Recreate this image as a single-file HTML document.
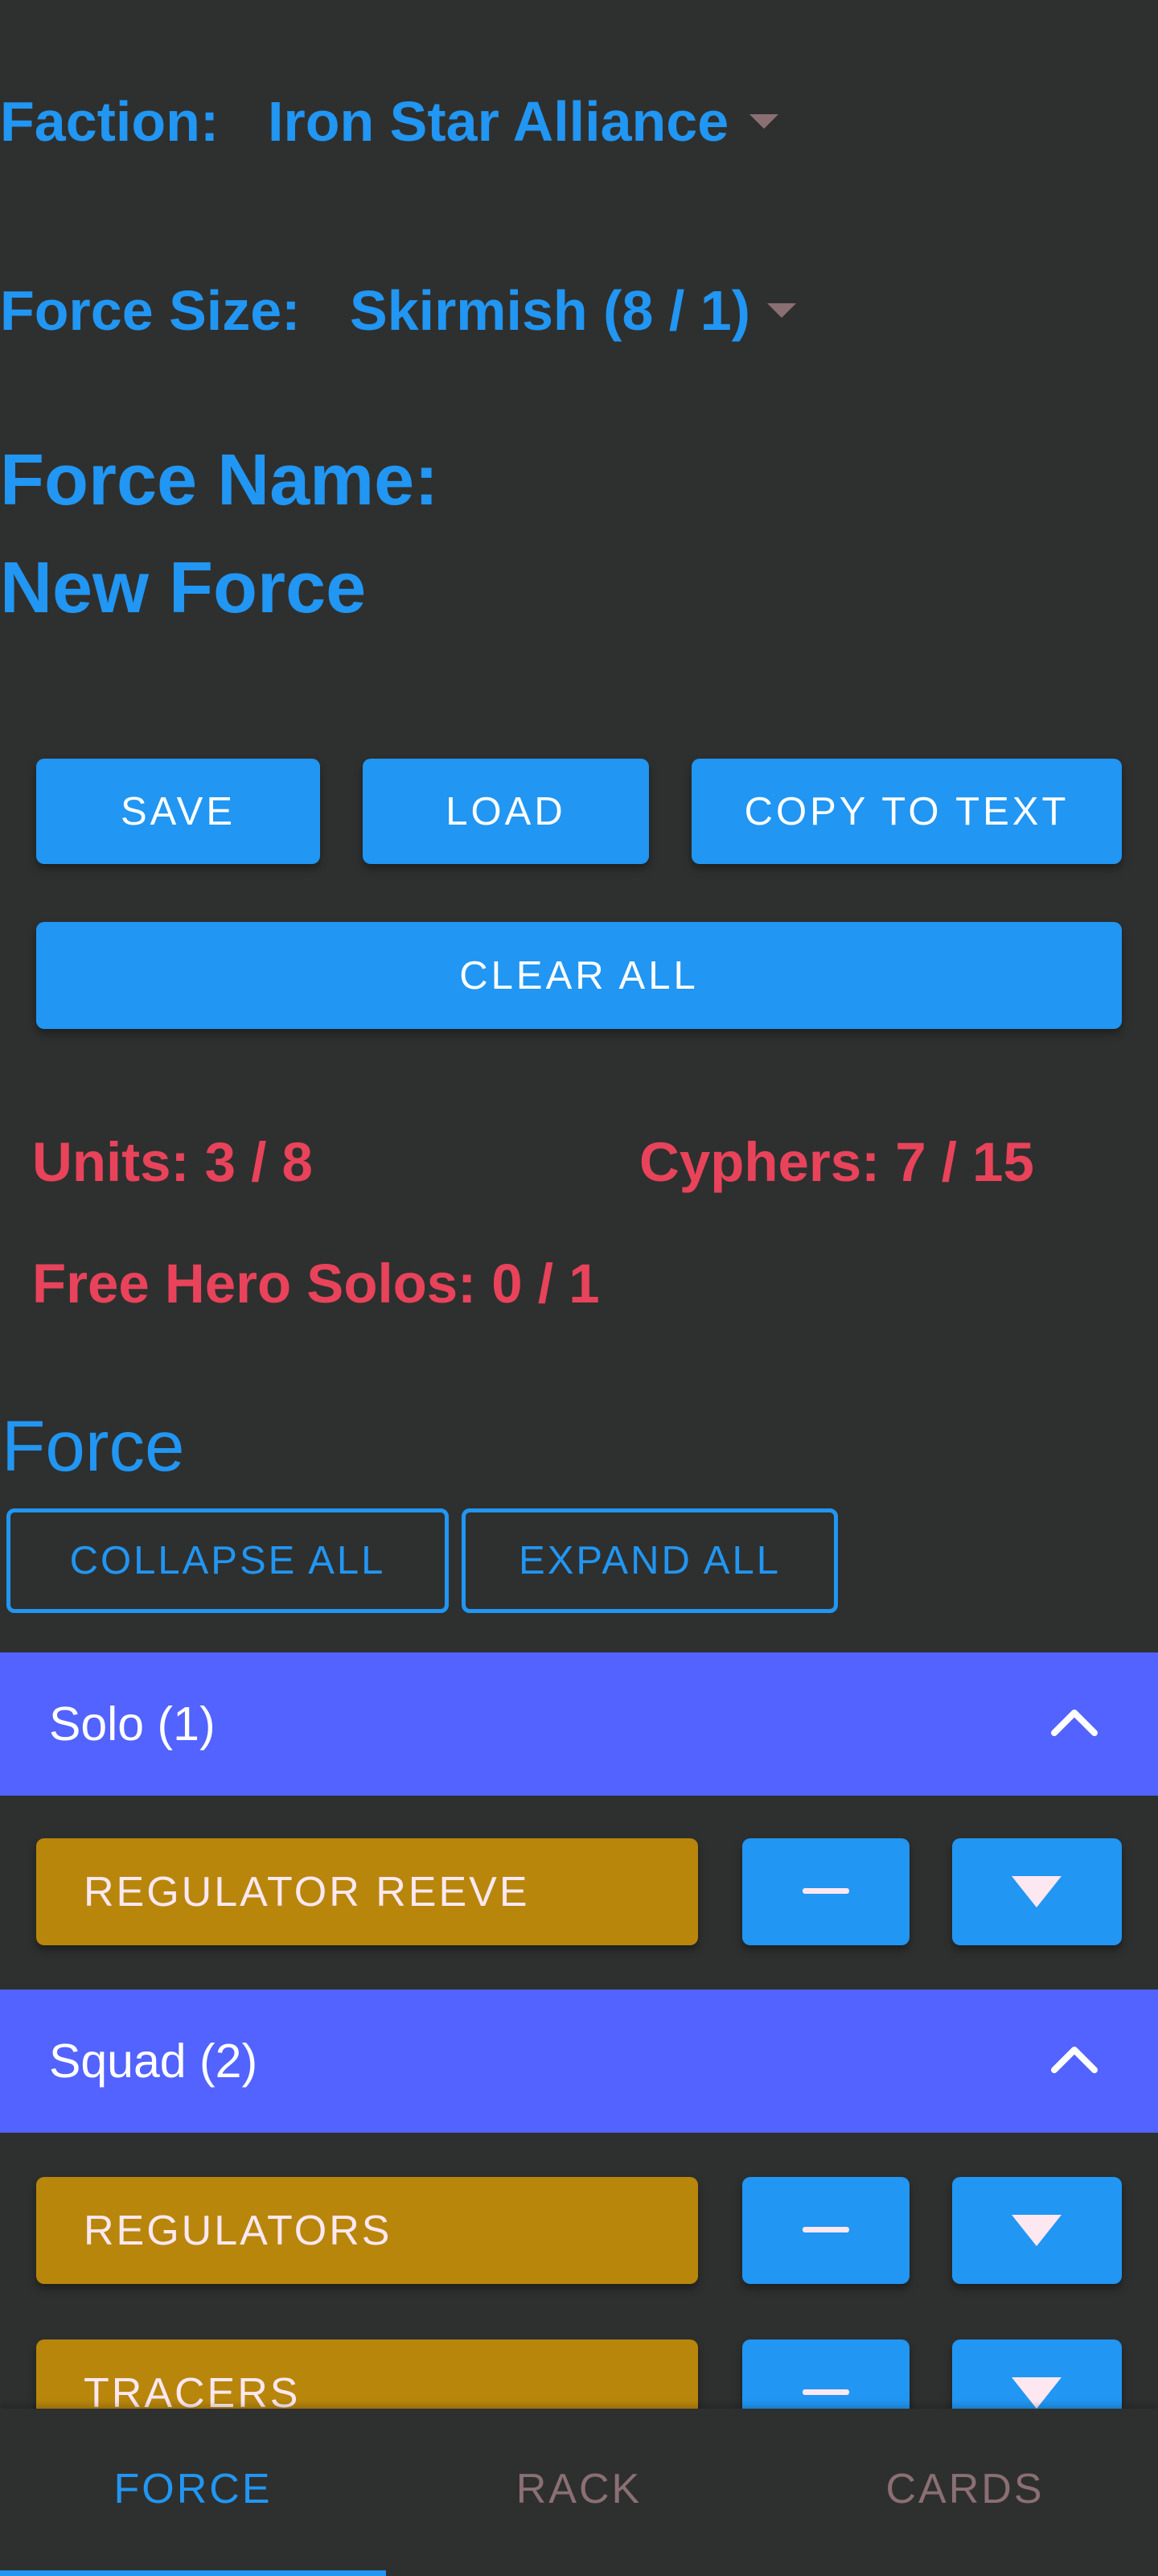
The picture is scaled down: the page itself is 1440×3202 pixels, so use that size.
<!DOCTYPE html>
<html><head><meta charset="utf-8"><style>
html,body{margin:0;padding:0;}
body{width:1440px;height:3202px;background:#2e302f;position:relative;overflow:hidden;font-family:"Liberation Sans",Arial,sans-serif;}
.a{position:absolute;white-space:nowrap;}
.blue{color:#2196f3;}
.red{color:#e8435a;font-weight:bold;font-size:69px;}
.btn{position:absolute;background:#2196f3;color:#fff;border-radius:10px;font-size:49px;letter-spacing:4px;display:flex;align-items:center;justify-content:center;box-shadow:0 6px 10px rgba(0,0,0,.35);}
.obtn{position:absolute;border:5px solid #2196f3;color:#2196f3;border-radius:10px;font-size:49px;letter-spacing:3px;display:flex;align-items:center;justify-content:center;box-sizing:border-box;}
.hdr{position:absolute;left:0;width:1440px;background:#5263ff;color:#fff;font-size:59px;}
.gold{position:absolute;left:45px;width:823px;background:#b8860b;color:#fde8f2;border-radius:10px;font-size:52px;letter-spacing:3px;box-sizing:border-box;padding-left:59px;display:flex;align-items:center;box-shadow:0 6px 10px rgba(0,0,0,.35);}
.sq{position:absolute;background:#2196f3;border-radius:10px;box-shadow:0 6px 10px rgba(0,0,0,.35);}
.minus{position:absolute;left:75px;top:62px;width:58px;height:7px;background:#fde8f2;border-radius:3px;}
.tri{position:absolute;left:74px;top:47px;width:0;height:0;border-left:31px solid transparent;border-right:31px solid transparent;border-top:39px solid #fde8f2;}
</style></head><body>
<div class="a blue" style="left:0;top:111px;font-size:70px;font-weight:bold;">Faction:</div>
<div class="a blue" style="left:333px;top:111px;font-size:70px;font-weight:bold;">Iron Star Alliance</div>
<div class="a" style="left:932px;top:142px;width:0;height:0;border-left:18px solid transparent;border-right:18px solid transparent;border-top:18px solid #8a6f73;"></div>
<div class="a blue" style="left:0;top:346px;font-size:70px;font-weight:bold;">Force Size:</div>
<div class="a blue" style="left:435px;top:346px;font-size:70px;font-weight:bold;">Skirmish (8 / 1)</div>
<div class="a" style="left:954px;top:377px;width:0;height:0;border-left:18px solid transparent;border-right:18px solid transparent;border-top:18px solid #8a6f73;"></div>
<div class="a blue" style="left:0;top:546px;font-size:90px;font-weight:bold;">Force Name:</div>
<div class="a blue" style="left:0;top:680px;font-size:90px;font-weight:bold;">New Force</div>

<div class="btn" style="left:45px;top:943px;width:353px;height:131px;">SAVE</div>
<div class="btn" style="left:451px;top:943px;width:356px;height:131px;">LOAD</div>
<div class="btn" style="left:860px;top:943px;width:535px;height:131px;">COPY TO TEXT</div>
<div class="btn" style="left:45px;top:1146px;width:1350px;height:133px;">CLEAR ALL</div>

<div class="a red" style="left:40px;top:1405px;">Units: 3 / 8</div>
<div class="a red" style="left:795px;top:1405px;">Cyphers: 7 / 15</div>
<div class="a red" style="left:40px;top:1556px;">Free Hero Solos: 0 / 1</div>

<div class="a blue" style="left:2px;top:1746px;font-size:89px;">Force</div>
<div class="obtn" style="left:8px;top:1875px;width:550px;height:130px;">COLLAPSE ALL</div>
<div class="obtn" style="left:574px;top:1875px;width:468px;height:130px;">EXPAND ALL</div>

<div class="hdr" style="top:2054px;height:178px;"><span class="a" style="left:61px;top:55px;">Solo (1)</span>
<svg class="a" style="left:1304px;top:64px" width="64" height="44" viewBox="0 0 64 44"><path d="M7 36 L32 11 L57 36" fill="none" stroke="#fff" stroke-width="8" stroke-linecap="round" stroke-linejoin="round"/></svg></div>
<div class="gold" style="top:2285px;height:133px;">REGULATOR REEVE</div>
<div class="sq" style="left:923px;top:2285px;width:208px;height:133px;"><div class="minus"></div></div>
<div class="sq" style="left:1184px;top:2285px;width:211px;height:133px;"><div class="tri"></div></div>

<div class="hdr" style="top:2473px;height:178px;"><span class="a" style="left:61px;top:55px;">Squad (2)</span>
<svg class="a" style="left:1304px;top:64px" width="64" height="44" viewBox="0 0 64 44"><path d="M7 36 L32 11 L57 36" fill="none" stroke="#fff" stroke-width="8" stroke-linecap="round" stroke-linejoin="round"/></svg></div>
<div class="gold" style="top:2706px;height:133px;">REGULATORS</div>
<div class="sq" style="left:923px;top:2706px;width:208px;height:133px;"><div class="minus"></div></div>
<div class="sq" style="left:1184px;top:2706px;width:211px;height:133px;"><div class="tri"></div></div>

<div class="gold" style="top:2908px;height:133px;">TRACERS</div>
<div class="sq" style="left:923px;top:2908px;width:208px;height:133px;"><div class="minus"></div></div>
<div class="sq" style="left:1184px;top:2908px;width:211px;height:133px;"><div class="tri"></div></div>

<div class="a" style="left:0;top:2994px;width:1440px;height:208px;background:#2e302f;box-shadow:0 -4px 8px rgba(0,0,0,.2);">
<div class="a" style="left:0;width:480px;top:70px;text-align:center;font-size:52px;letter-spacing:3px;color:#2196f3;">FORCE</div>
<div class="a" style="left:480px;width:480px;top:70px;text-align:center;font-size:52px;letter-spacing:3px;color:#8a6f73;">RACK</div>
<div class="a" style="left:960px;width:480px;top:70px;text-align:center;font-size:52px;letter-spacing:3px;color:#8a6f73;">CARDS</div>
<div class="a" style="left:0;top:201px;width:480px;height:7px;background:#2196f3;"></div>
</div>
</body></html>
